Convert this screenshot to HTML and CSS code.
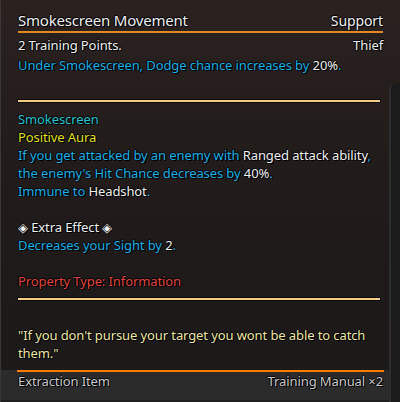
FILE: index.html
```
<!DOCTYPE html>
<html lang="en">
<head>
    <meta charset="UTF-8">
    <meta name="viewport" content="width=device-width, initial-scale=1.0">
    <title>Smokescreen Movement</title>
    <link rel="stylesheet" href="styles.css">
</head>
<body>
    <div class="tooltip">
        <div class="body">
            <div class="head">
                <span class="title">Smokescreen Movement</span>
                <span>Support</span>
            </div>
            <div class="row">
                <span>2 Training Points.</span>
                <span>Thief</span>
            </div>
            <div class="blue lead">Under Smokescreen, Dodge chance increases by <span class="white">20%</span>.</div>
            <div class="gap"></div>
            <div class="rule"></div>

            <div class="teal">Smokescreen</div>
            <div class="yellow">Positive Aura</div>
            <div class="blue">If you get attacked by an enemy with <span class="white">Ranged attack ability</span>,</div>
            <div class="blue">the enemy's Hit Chance decreases by <span class="white">40%</span>.</div>
            <div class="blue">Immune to <span class="white">Headshot</span>.</div>
            <div class="gap"></div>
            <div class="white">&#9672; Extra Effect &#9672;</div>
            <div class="blue">Decreases your Sight by <span class="white">2</span>.</div>
            <div class="gap"></div>
            <div class="red">Property Type: Information</div>
            <div class="rule"></div>
            <div class="gap"></div>
            <div class="quote">"If you don't pursue your target you wont be able to catch them."</div>
        </div>
        <div class="foot">
            <span>Extraction Item</span>
            <span>Training Manual &times;2</span>
        </div>
        <div class="side"></div>
    </div>
</body>
</html>
```

FILE: styles.css
```
body {
    margin: 0;
    width: 400px;
    height: 402px;
    overflow: hidden;
    background: #1c1a1a;
    font-family: 'Noto Sans', 'Open Sans', sans-serif;
    font-size: 13px;
    line-height: 18px;
    letter-spacing: -0.1px;
    color: #f2f2f2;
}
.tooltip {
    position: relative;
    height: 402px;
    display: flex;
    flex-direction: column;
    border-left: 1px solid #3a3836;
    box-sizing: border-box;
    text-shadow: 0 0 1px #000, 1px 1px 0 #000, -1px 0 0 #000, 0 -1px 0 #000;
}
.body {
    flex: 1;
    padding: 10px 17px 0 17px;
    background: linear-gradient(to bottom, #2b2220 0%, #221c1b 40%, #1c1919 100%);
}
.head {
    display: flex;
    justify-content: space-between;
    align-items: baseline;
    font-size: 14px;
    line-height: 20px;
    border-bottom: 2px solid #e08a20;
    margin-bottom: 3px;
}
.title {
    font-size: 15px;
    letter-spacing: -0.2px;
}
.row {
    display: flex;
    justify-content: space-between;
}
.lead {
    margin-top: 2px;
}
.gap {
    height: 18px;
}
.rule {
    height: 2px;
    background: #f3cd84;
    border: 1px solid #0c0908;
    margin: 7px 2px 7px -1px;
}
.white { color: #f2f2f2; }
.blue { color: #1cb2ea; }
.teal { color: #22c6d2; }
.yellow { color: #e6e21e; }
.red { color: #e2463e; }
.quote {
    color: #f0e9a2;
}
.foot {
    display: flex;
    justify-content: space-between;
    height: 27px;
    padding: 3px 17px 0 17px;
    background: linear-gradient(#ff7a00, #ff7a00) 16px 0 / 367px 2px no-repeat, #2b2b2b;
    border-bottom: 2px solid #202020;
    color: #cccccc;
    line-height: 16px;
    font-size: 13px;
}
.side {
    position: absolute;
    left: 388px;
    top: 83px;
    width: 20px;
    height: 330px;
    background: #1b1b1b;
    border-left: 2px solid #2e2e2e;
    border-radius: 6px 0 0 0;
}
```
